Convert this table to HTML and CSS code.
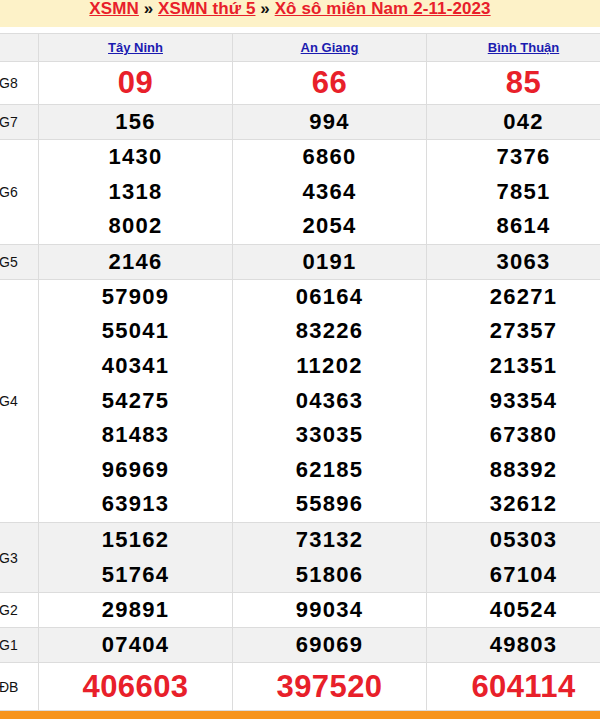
FILE: index.html
```html
<!DOCTYPE html>
<html lang="vi">
<head>
<meta charset="utf-8">
<title>XSMN 2-11-2023</title>
<link rel="stylesheet" href="styles.css">
</head>
<body>
<div class="page">
  <div class="crumbs">
    <a href="#">XSMN</a> » <a href="#">XSMN thứ 5</a> » <a href="#">Xô sô miên Nam 2-11-2023</a>
  </div>
  <table class="kq">
    <colgroup><col class="c-lbl"><col class="c-p"><col class="c-p"><col class="c-p"></colgroup>
    <thead>
      <tr class="head"><th></th><th><a href="#">Tây Ninh</a></th><th><a href="#">An Giang</a></th><th><a href="#">Bình Thuận</a></th></tr>
    </thead>
    <tbody>
      <tr class="g8"><td class="lbl">G8</td><td class="red">09</td><td class="red">66</td><td class="red">85</td></tr>
      <tr class="alt one"><td class="lbl">G7</td><td><div class="n">156</div></td><td><div class="n">994</div></td><td><div class="n">042</div></td></tr>
      <tr><td class="lbl">G6</td>
        <td><div class="n">1430</div><div class="n">1318</div><div class="n">8002</div></td>
        <td><div class="n">6860</div><div class="n">4364</div><div class="n">2054</div></td>
        <td><div class="n">7376</div><div class="n">7851</div><div class="n">8614</div></td></tr>
      <tr class="alt one"><td class="lbl">G5</td><td><div class="n">2146</div></td><td><div class="n">0191</div></td><td><div class="n">3063</div></td></tr>
      <tr><td class="lbl">G4</td>
        <td><div class="n">57909</div><div class="n">55041</div><div class="n">40341</div><div class="n">54275</div><div class="n">81483</div><div class="n">96969</div><div class="n">63913</div></td>
        <td><div class="n">06164</div><div class="n">83226</div><div class="n">11202</div><div class="n">04363</div><div class="n">33035</div><div class="n">62185</div><div class="n">55896</div></td>
        <td><div class="n">26271</div><div class="n">27357</div><div class="n">21351</div><div class="n">93354</div><div class="n">67380</div><div class="n">88392</div><div class="n">32612</div></td></tr>
      <tr class="alt"><td class="lbl">G3</td>
        <td><div class="n">15162</div><div class="n">51764</div></td>
        <td><div class="n">73132</div><div class="n">51806</div></td>
        <td><div class="n">05303</div><div class="n">67104</div></td></tr>
      <tr class="one"><td class="lbl">G2</td><td><div class="n">29891</div></td><td><div class="n">99034</div></td><td><div class="n">40524</div></td></tr>
      <tr class="alt one"><td class="lbl">G1</td><td><div class="n">07404</div></td><td><div class="n">69069</div></td><td><div class="n">49803</div></td></tr>
      <tr class="db"><td class="lbl">ĐB</td><td class="red">406603</td><td class="red">397520</td><td class="red">604114</td></tr>
    </tbody>
  </table>
  <div class="foot"></div>
</div>
</body>
</html>
```

FILE: styles.css
```css
html, body {
  margin: 0;
  padding: 0;
  background: #fff;
  overflow: hidden;
  height: 719px;
}
body {
  font-family: "Liberation Sans", Arial, sans-serif;
  color: #000;
}
.page {
  width: 640px;
  margin-left: -12px;
}
.crumbs {
  background: #fdf2c8;
  height: 27px;
  line-height: 17px;
  padding-right: 20px;
  text-align: center;
  font-size: 17px;
  font-weight: bold;
  letter-spacing: 0.1px;
  color: #111;
  margin-right: 28px;
  margin-left: 12px;
  margin-bottom: 6px;
}
.crumbs a {
  color: #e8202a;
  text-decoration: underline;
}
.kq {
  border-collapse: collapse;
  table-layout: fixed;
  width: 632px;
}
.c-lbl { width: 50px; }
.c-p { width: 194px; }
.kq th, .kq td {
  border: 1px solid #dcdcdc;
  padding: 0;
  text-align: center;
  vertical-align: middle;
}
.head th {
  background: #f1f1f1;
  height: 27px;
  font-size: 13px;
  font-weight: bold;
}
.head a {
  color: #1b1bb0;
  text-decoration: underline;
}
.alt td {
  background: #f1f1f1;
}
.kq td.lbl {
  text-align: left;
  padding-left: 10px;
  font-size: 14px;
  font-weight: normal;
  color: #111;
}
.n {
  height: 34.6px;
  line-height: 34.6px;
  font-size: 22px;
  font-weight: bold;
  letter-spacing: 1.3px;
}
.one .n {
  height: 34px;
  line-height: 34px;
}
.red {
  color: #e8202a;
  font-weight: bold;
  font-size: 31px;
  letter-spacing: 0.4px;
}
.g8 td { height: 42px; }
.db td { height: 47px; }
.foot {
  background: #f7941d;
  height: 20px;
  width: 612px;
  margin-left: 12px;
}
```
